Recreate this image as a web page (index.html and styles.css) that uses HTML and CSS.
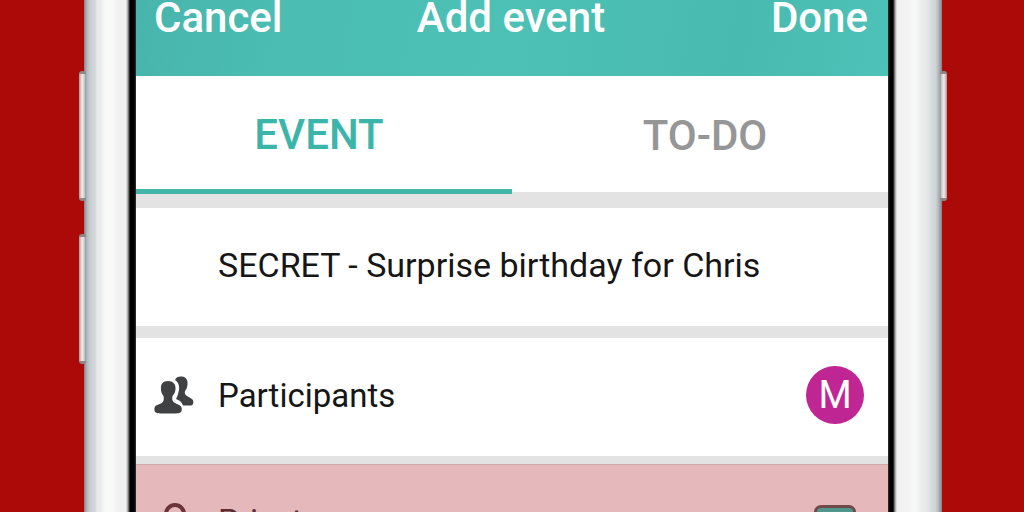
FILE: index.html
```html
<!DOCTYPE html>
<html lang="en">
<head>
<meta charset="utf-8">
<title>Add event</title>
<link rel="stylesheet" href="styles.css">
</head>
<body>
<div class="phone">
  <span class="side-key side-key-left side-key-upper"></span>
  <span class="side-key side-key-left side-key-lower"></span>
  <span class="side-key side-key-right side-key-upper"></span>
  <div class="bezel bezel-left"></div>
  <main class="screen">
    <header class="bar">
      <button class="bar-button" type="button">Cancel</button>
      <h1 class="bar-title">Add event</h1>
      <button class="bar-button bar-button-end" type="button">Done</button>
    </header>
    <nav class="tabs">
      <button class="tab tab-active" type="button">EVENT</button>
      <button class="tab tab-idle" type="button">TO-DO</button>
    </nav>
    <form class="rows">
      <div class="row row-title">
        <input class="title-input" type="text" aria-label="Event title" value="SECRET - Surprise birthday for Chris">
      </div>
      <div class="row">
        <svg class="icon" viewBox="0 0 40 40" aria-hidden="true">
          <path fill="#404142" d="M21 5C22 2 25 1 28 1.500C32 2 34 5 33.500 9C33.500 12 32.500 14 31 16C30.500 18 31 20 33 21L38 24C40 25.500 40 30 37 30.500H29C28 27 25 25 22 24C23 22 24 20 24.500 17C26 13 25 7 21 5Z"/>
          <path fill="#404142" d="M14 6C19 6 22 9 21.500 14C21.500 17 20 19 18.500 21C18 24 18 26 21 28L26 30.500C28 32 28.500 35 27 37C26 38.500 23 38.500 14 38.500S3 38.500 1 37C0 35 0 32 2 30.500L8 28C10 26 10 24 9.500 21C8 19 7 17 7 14C6.500 9 9 6 14 6Z"/>
        </svg>
        <span class="row-label">Participants</span>
        <span class="avatar">M</span>
      </div>
      <div class="row row-private">
        <svg class="icon" viewBox="0 0 40 40" aria-hidden="true">
          <path fill="none" stroke="#6b3439" stroke-width="4" d="M12 18V12a9 9 0 0 1 18 0V18"/>
          <rect x="8" y="18" width="26" height="20" rx="3" fill="#6b3439"/>
        </svg>
        <label class="row-label" for="private">Private</label>
        <input class="check" id="private" type="checkbox" checked>
      </div>
    </form>
  </main>
  <div class="bezel bezel-right"></div>
</div>
</body>
</html>
```
FILE: styles.css
```css
* {
  box-sizing: border-box;
}

body {
  margin: 0;
  height: 100vh;
  overflow: hidden;
  background: #ac0a08;
  font-family: Roboto, "Liberation Sans", sans-serif;
}

button,
input {
  margin: 0;
  padding: 0;
  border: 0;
  background: none;
  font: inherit;
  color: inherit;
}

.phone {
  position: relative;
  display: flex;
  height: 100%;
  margin: 0 82px 0 84px;
}

.bezel {
  flex: none;
}

.bezel-left {
  width: 52px;
  background: linear-gradient(to right, #8f7f84 0, #b3bbc0 3px, #c9ced2 6px, #d3d7da 11px, #e6e8e9 13px, #ebecec 17px, #f8f8f8 21px, #fafafa 28px, #f1f1f1 34px, #f1f1f1 42px, #999 44px, #000 46px, #000 50px, #333 52px);
}

.bezel-right {
  width: 54px;
  background: linear-gradient(to right, #333 0, #000 2px, #000 5px, #999 7px, #f1f1f1 9px, #f3f3f3 20px, #f8f8f8 27px, #ebecec 34px, #e4e7e8 40px, #d5dadd 44px, #cdd2d5 48px, #aab2b6 51px, #8f7f84 54px);
}

.side-key {
  position: absolute;
  width: 7px;
  height: 130px;
  border: solid #8d8786;
  border-width: 3px 0;
  border-radius: 3px;
}

.side-key-left {
  left: -5px;
  background: linear-gradient(to right, #b98f8d, #ededed 3px, #d3d3d3 5px, #92989c);
}

.side-key-right {
  right: -5px;
  background: linear-gradient(to left, #b98f8d, #ededed 3px, #d3d3d3 5px, #92989c);
}

.side-key-upper {
  top: 71px;
}

.side-key-lower {
  top: 234px;
}

.screen {
  flex: 1;
  min-width: 0;
  overflow: hidden;
  background: #e3e3e3;
}

.bar {
  display: grid;
  grid-template-columns: 1fr auto 1fr;
  align-items: center;
  height: 76px;
  padding: 0 20px 40px 18px;
  background: linear-gradient(100deg, #48b5ac 0, #4bbdb3 20%, #4dc1b6 50%, #49bab0 80%, #4dc2b8 100%);
  color: #fff;
  font-size: 42px;
  font-weight: 500;
  line-height: 36px;
}

.bar-button {
  justify-self: start;
}

.bar-button-end {
  justify-self: end;
}

.bar-title {
  margin: 0;
  font-size: inherit;
  font-weight: inherit;
}

.tabs {
  display: grid;
  grid-template-columns: 1fr 1fr;
  height: 132px;
}

.tab {
  height: 116px;
  background: #fff;
  color: #969696;
  font-size: 42px;
  font-weight: 500;
}

.tab-active {
  height: 118px;
  padding: 4px 10px 0 0;
  border-bottom: 5px solid #43b5aa;
  color: #3bb5a9;
}

.tab-idle {
  padding: 2px 0 0 10px;
}

.rows {
  display: grid;
  gap: 12px;
}

.row {
  display: flex;
  align-items: center;
  height: 118px;
  padding: 0 24px 4px 18px;
  background: #fff;
  color: #161616;
  font-size: 33px;
}

.row-title {
  font-size: 34px;
}

.row-private {
  margin-top: -4px;
  border-top: 1px solid #cfa9ab;
  background: #e5b9bb;
  color: #5d2b30;
}

.title-input {
  flex: 1;
  min-width: 0;
  height: 48px;
  margin-left: 64px;
}

.icon {
  flex: none;
  width: 40px;
  height: 40px;
  margin-right: 24px;
}

.row-label {
  flex: 1;
}

.avatar {
  display: grid;
  place-items: center;
  width: 58px;
  height: 58px;
  border-radius: 50%;
  background: #bf2593;
  color: #fff;
  font-size: 38px;
}

.check {
  appearance: none;
  width: 42px;
  height: 34px;
  margin-right: 8px;
  border: 3px solid #70494a;
  border-radius: 7px;
  background: #4f968b;
}
```
